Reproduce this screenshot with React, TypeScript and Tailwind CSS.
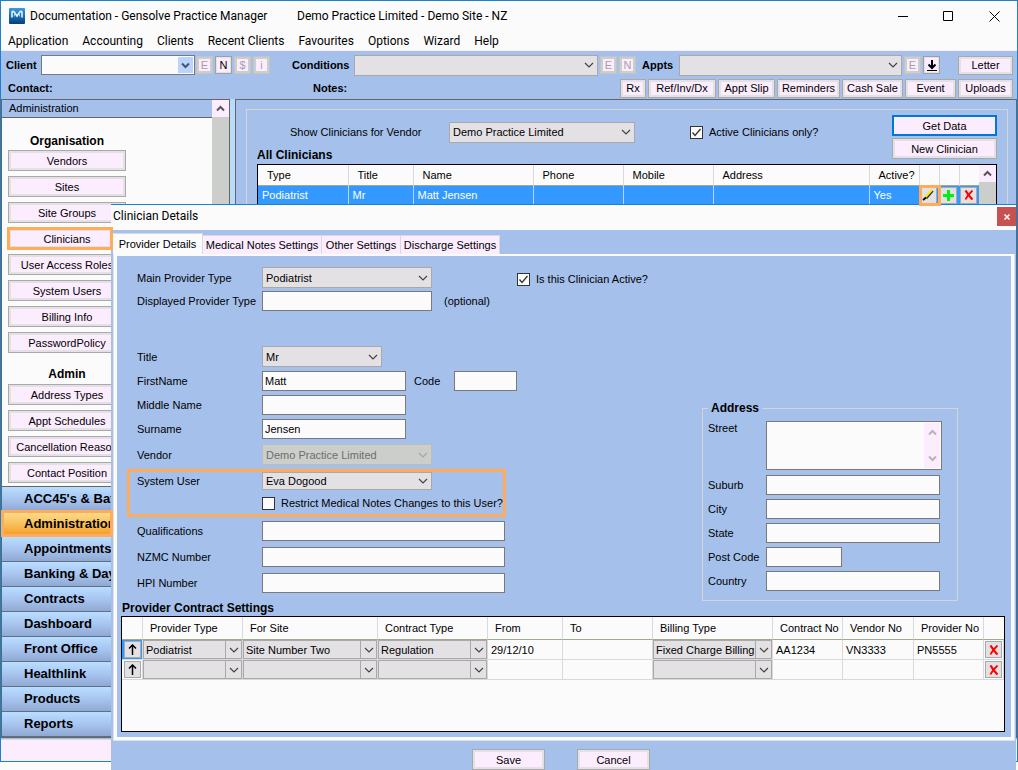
import type { ReactNode } from 'react';
import clsx from 'clsx';

const MENU = ['Application', 'Accounting', 'Clients', 'Recent Clients', 'Favourites', 'Options', 'Wizard', 'Help'];

const ORGANISATION = [
  'Vendors',
  'Sites',
  'Site Groups',
  'Clinicians',
  'User Access Roles',
  'System Users',
  'Billing Info',
  'PasswordPolicy',
];

const ADMIN = ['Address Types', 'Appt Schedules', 'Cancellation Reason', 'Contact Position'];

const SECTIONS = [
  "ACC45's & Batches",
  'Administration',
  'Appointments',
  'Banking & Day',
  'Contracts',
  'Dashboard',
  'Front Office',
  'Healthlink',
  'Products',
  'Reports',
];

/** Quick actions on the second toolbar row */
const ACTIONS = [
  { label: 'Rx', width: 'w-[26px]' },
  { label: 'Ref/Inv/Dx', width: 'w-[68px]' },
  { label: 'Appt Slip', width: 'w-[57px]' },
  { label: 'Reminders', width: 'w-[63px]' },
  { label: 'Cash Sale', width: 'w-[61px]' },
  { label: 'Event', width: 'w-[51px]' },
  { label: 'Uploads', width: 'w-[55px]' },
];

const CONTRACTS = [
  {
    id: 1,
    providerType: 'Podiatrist',
    site: 'Site Number Two',
    contractType: 'Regulation',
    from: '29/12/10',
    billing: 'Fixed Charge Billing',
    contractNo: 'AA1234',
    vendorNo: 'VN3333',
    providerNo: 'PN5555',
  },
  {
    id: 2,
    providerType: '',
    site: '',
    contractType: '',
    from: '',
    billing: '',
    contractNo: '',
    vendorNo: '',
    providerNo: '',
  },
];

/* ---------- icons ---------- */

function Chevron({ className, up = false }: { className?: string; up?: boolean }) {
  return (
    <svg viewBox="0 0 10 6" className={clsx('h-[6px] w-[10px]', className)} fill="none" stroke="currentColor">
      <path d={up ? 'M1 5l4-4 4 4' : 'M1 1l4 4 4-4'} strokeWidth="1.2" />
    </svg>
  );
}

function BoldChevron({ className, up = false }: { className?: string; up?: boolean }) {
  return (
    <svg viewBox="0 0 9 7" className={clsx('h-[7px] w-[9px]', className)} fill="none" stroke="currentColor">
      <path d={up ? 'M1 5.5l3.5-3.5L8 5.5' : 'M1 1.5L4.5 5 8 1.5'} strokeWidth="2" />
    </svg>
  );
}

function AppLogo() {
  return (
    <svg viewBox="0 0 16 16" className="h-4 w-4">
      <defs>
        <linearGradient id="logo-bg" x1="0" y1="0" x2="0" y2="1">
          <stop offset="0" stopColor="#3d9ade" />
          <stop offset="0.5" stopColor="#1870b8" />
          <stop offset="1" stopColor="#0b3c74" />
        </linearGradient>
      </defs>
      <rect width="16" height="16" rx="1" fill="url(#logo-bg)" />
      <path
        d="M3 9.500V4.500C3 3 5 3 5.500 4.500L8 8l2.500-3.500C11 3 13 3 13 4.500v5"
        fill="none"
        stroke="#e8f3fb"
        strokeWidth="1.600"
      />
      <path d="M5.500 8.500V6M10.500 8.500V6" fill="none" stroke="#9cc6e8" strokeWidth="1" />
    </svg>
  );
}

function CrossIcon() {
  return (
    <svg viewBox="0 0 10 10" className="h-[10px] w-[10px]" fill="none" stroke="#f00">
      <path d="M1.500 0.500C3 3 6 7 8.500 9.500" strokeWidth="2.200" />
      <path d="M8.500 0.500C6 3 3 6 1.500 9.500" strokeWidth="1.800" />
    </svg>
  );
}

function PlusIcon() {
  return (
    <svg viewBox="0 0 11 11" className="h-[11px] w-[11px]">
      <path d="M4 0h3v4h4v3H7v4H4V7H0V4h4z" fill="#00f010" />
    </svg>
  );
}

function PencilIcon() {
  return (
    <svg viewBox="0 0 12 12" className="h-3 w-3" fill="none">
      <path d="M11 2L4.500 9.500" stroke="#222" strokeWidth="1.500" />
      <path d="M10 1L3.500 8" stroke="#f5ea00" strokeWidth="2" />
      <path d="M4 8.500L1 11" stroke="#000" strokeWidth="1.800" />
    </svg>
  );
}

function UpArrowIcon() {
  return (
    <svg viewBox="0 0 9 11" className="h-[11px] w-[9px]" fill="none" stroke="#000">
      <path d="M4.500 11V1" strokeWidth="1.500" />
      <path d="M1 4.500l3.500-3.500 3.500 3.500" strokeWidth="1.500" />
    </svg>
  );
}

function DownloadIcon() {
  return (
    <svg viewBox="0 0 10 11" className="h-[11px] w-[10px]" fill="none" stroke="#000">
      <path d="M5 0v8M1.500 4.500L5 8l3.500-3.500" strokeWidth="2" />
      <path d="M0 10.500h10" />
    </svg>
  );
}

/* ---------- controls ---------- */

function Button({ children, className, primary = false }: { children: ReactNode; className?: string; primary?: boolean }) {
  return (
    <button
      type="button"
      className={clsx(
        'flex shrink-0 items-center justify-center whitespace-nowrap bg-[#fcedfe]',
        primary ? 'border-2 border-[#0078d7]' : 'border border-[#a9a9a9] shadow-[inset_0_0_0_2px_#e3e1e4]',
        className,
      )}
    >
      {children}
    </button>
  );
}

/** Square one-letter toolbar button */
function MiniButton({ children, label, disabled = false }: { children: ReactNode; label: string; disabled?: boolean }) {
  return (
    <button
      type="button"
      aria-label={label}
      disabled={disabled}
      className={clsx(
        'flex h-[18px] w-[17px] shrink-0 items-center justify-center border bg-[#fcedfe]',
        disabled
          ? 'border-[#c4c4c4] text-[#a5a0a8] shadow-[inset_0_0_0_2px_#cccecc]'
          : 'border-[#a0a0a0] shadow-[inset_0_0_0_1px_#e3e1e4]',
      )}
    >
      {children}
    </button>
  );
}

interface SelectProps {
  id?: string;
  label?: string;
  value?: string;
  className?: string;
  disabled?: boolean;
  /** Draws a rule between the value and the arrow, as in grid cells */
  split?: boolean;
}

function Select({ id, label, value = '', className, disabled = false, split = false }: SelectProps) {
  return (
    <span className={clsx('relative block', className)}>
      <select
        id={id}
        aria-label={label}
        defaultValue={value}
        disabled={disabled}
        className={clsx(
          'block h-full w-full appearance-none border',
          split ? 'pl-[2px]' : 'pr-4 pl-[3px]',
          disabled ? 'border-[#bcbcbc] bg-[#cccecc] text-[#6d6d6d] opacity-100' : 'border-[#a9a9a9] bg-[#e3e1e4]',
        )}
      >
        <option>{value}</option>
      </select>
      <span
        className={clsx(
          'pointer-events-none absolute inset-y-0 right-0 flex items-center justify-center',
          split ? 'w-[17px] border-l border-[#a9a9a9]' : 'w-[18px]',
          disabled ? 'text-[#a5a5a5]' : 'text-[#444]',
        )}
      >
        <Chevron />
      </span>
    </span>
  );
}

function TextInput({ id, value, className }: { id: string; value?: string; className?: string }) {
  return (
    <input
      id={id}
      type="text"
      defaultValue={value}
      className={clsx('h-5 border border-[#7a7a7a] bg-[#fbfbfb] px-0.5', className)}
    />
  );
}

function CheckBox({ label, checked = false }: { label: string; checked?: boolean }) {
  return (
    <label className="flex items-center gap-[6px] whitespace-nowrap">
      <span className="relative block h-[13px] w-[13px]">
        <input
          type="checkbox"
          defaultChecked={checked}
          className="peer block h-[13px] w-[13px] appearance-none border border-[#333] bg-[#fbfbfb]"
        />
        <svg
          viewBox="0 0 13 13"
          className="pointer-events-none absolute inset-0 hidden h-[13px] w-[13px] peer-checked:block"
          fill="none"
          stroke="#333"
        >
          <path d="M2.500 6.500L5 9.500l5.500-6.500" strokeWidth="1.300" />
        </svg>
      </span>
      {label}
    </label>
  );
}

function Field({ id, label, className, children }: { id: string; label: string; className?: string; children: ReactNode }) {
  return (
    <div className={clsx('flex items-center pl-[10px]', className)}>
      <label htmlFor={id} className="w-[125px] shrink-0 whitespace-nowrap">
        {label}
      </label>
      {children}
    </div>
  );
}

function AddressField({ id, label, width = 'w-[174px]' }: { id: string; label: string; width?: string }) {
  return (
    <div className="mt-1 flex items-center">
      <label htmlFor={id} className="w-[58px] shrink-0">
        {label}
      </label>
      <TextInput id={id} className={width} />
    </div>
  );
}

/** Orange marker around a sidebar entry */
function Highlight({ className }: { className: string }) {
  return <span className={clsx('pointer-events-none absolute z-10 border-3 border-[#ffab5c]', className)} />;
}

/* ---------- main window ---------- */

function TitleBar() {
  return (
    <header className="bg-[#fbfbfb] font-['Roboto',sans-serif] text-[12px]">
      <div className="flex h-[30px] items-center pl-2">
        <AppLogo />
        <h1 className="ml-[5px] w-[267px] whitespace-nowrap">Documentation - Gensolve Practice Manager</h1>
        <span className="whitespace-nowrap">Demo Practice Limited - Demo Site - NZ</span>
        <div className="ml-auto flex">
          <button type="button" aria-label="Minimise" className="flex h-[30px] w-[45px] items-center justify-center">
            <svg viewBox="0 0 11 11" className="h-[11px] w-[11px]" stroke="#000">
              <path d="M0 5.500h10" />
            </svg>
          </button>
          <button type="button" aria-label="Maximise" className="flex h-[30px] w-[45px] items-center justify-center">
            <svg viewBox="0 0 11 11" className="h-[11px] w-[11px]" stroke="#000" fill="none">
              <path d="M0.500 0.500h9v9h-9z" />
            </svg>
          </button>
          <button type="button" aria-label="Close" className="flex h-[30px] w-[46px] items-center justify-center">
            <svg viewBox="0 0 11 11" className="h-[11px] w-[11px]" stroke="#000">
              <path d="M0.500 0.500l10 10M10.500 0.500l-10 10" />
            </svg>
          </button>
        </div>
      </div>
      <nav className="flex h-5 items-center gap-[14px] border-b border-[#fcedfe] pl-[7px]">
        {MENU.map((item) => (
          <button key={item} type="button" className="whitespace-nowrap">
            {item}
          </button>
        ))}
      </nav>
    </header>
  );
}

function Toolbar() {
  return (
    <div className="h-12 pt-1 pl-[5px] pr-1">
      <div className="flex h-5 items-center">
        <label htmlFor="client" className="w-[35px] font-bold">
          Client
        </label>
        <span className="relative mr-px block h-5 w-[154px]">
          <select id="client" className="block h-5 w-full appearance-none border border-[#7a7a7a] bg-[#fbfbfb]" />
          <span className="pointer-events-none absolute inset-y-[2px] right-[2px] flex w-[15px] items-center justify-center bg-[#bcd4fb] text-[#44566f]">
            <BoldChevron />
          </span>
        </span>
        <div className="flex gap-[2px]">
          <MiniButton label="Edit client" disabled>E</MiniButton>
          <MiniButton label="New client">N</MiniButton>
          <MiniButton label="Client account" disabled>$</MiniButton>
          <MiniButton label="Client info" disabled>i</MiniButton>
        </div>
        <label htmlFor="conditions" className="ml-[22px] w-[62px] font-bold">
          Conditions
        </label>
        <Select id="conditions" className="h-[21px] flex-1" />
        <div className="ml-[2px] flex gap-[2px]">
          <MiniButton label="Edit condition" disabled>E</MiniButton>
          <MiniButton label="New condition" disabled>N</MiniButton>
        </div>
        <label htmlFor="appts" className="ml-[6px] w-[37px] font-bold">
          Appts
        </label>
        <Select id="appts" className="h-[21px] w-[223px]" />
        <div className="ml-[2px] flex gap-[2px]">
          <MiniButton label="Edit appointment" disabled>E</MiniButton>
          <MiniButton label="Download">
            <DownloadIcon />
          </MiniButton>
        </div>
        <Button className="ml-[18px] h-[19px] w-[55px]">Letter</Button>
      </div>
      <div className="mt-[3px] flex h-5 items-center">
        <span className="w-[307px] pl-[2px] font-bold">Contact:</span>
        <span className="font-bold">Notes:</span>
        <div className="ml-auto flex gap-[2px]">
          {ACTIONS.map(({ label, width }) => (
            <Button key={label} className={clsx('h-[19px]', width)}>
              {label}
            </Button>
          ))}
        </div>
      </div>
    </div>
  );
}

function Sidebar() {
  return (
    <aside className="flex w-[229px] shrink-0 flex-col border border-[#666] bg-[#fbfbfb]">
      <div className="flex h-[386px]">
        <div className="flex-1">
          <h2 className="h-[18px] border-b border-[#666] bg-[#a5c0eb] pl-[7px] leading-[17px]">Administration</h2>
          <div className="w-[124px] pl-[6px]">
            <h3 className="mt-[14px] h-[18px] text-center text-[12px] leading-[18px] font-bold">Organisation</h3>
            <div className="flex flex-col gap-[5px]">
              {ORGANISATION.map((item) => (
                <div key={item} className="relative">
                  <Button className="h-[21px] w-[118px]">{item}</Button>
                  {item === 'Clinicians' && <Highlight className="-top-px -left-px h-[23px] w-[106px]" />}
                </div>
              ))}
            </div>
            <h3 className="mt-3 h-[19px] text-center text-[12px] leading-[19px] font-bold">Admin</h3>
            <div className="flex flex-col gap-[5px]">
              {ADMIN.map((item) => (
                <Button key={item} className="h-[21px] w-[118px]">
                  {item}
                </Button>
              ))}
            </div>
          </div>
        </div>
        <div className="w-[17px] bg-[#cccecc]">
          <div className="flex h-[17px] items-center justify-center bg-[#fcedfe] text-[#555]">
            <BoldChevron up />
          </div>
        </div>
      </div>
      <nav className="border-t border-[#666]">
        {SECTIONS.map((item) => (
          <div key={item} className="relative">
            <button
              type="button"
              className={clsx(
                'block h-[25px] w-full border-b border-[#5f6f86] bg-linear-to-b pl-[22px] text-left text-[13px] font-bold whitespace-nowrap',
                item === 'Administration'
                  ? 'from-[#fbdc8c] via-[#f8c05a] to-[#f39a1e]'
                  : 'from-[#b9deff] via-[#a8c5f0] to-[#8fa9d2]',
              )}
            >
              {item}
            </button>
            {item === 'Administration' && <Highlight className="-top-0.5 -left-px h-[27px] w-[112px]" />}
          </div>
        ))}
      </nav>
    </aside>
  );
}

function CliniciansPane() {
  const head = 'border-r border-[#d9d9d9] pl-[9px] text-left font-normal last:border-r-0';
  const cell = 'border-r border-[#b8d8f8] pl-1 last:border-r-0';
  const tool = 'flex h-[17px] w-[17px] items-center justify-center border border-[#a9a9a9] bg-[#e3e1e4]';

  return (
    <main className="min-w-0 flex-1 border-t border-r border-l border-[#666] pt-[9px] pr-2 pl-[10px]">
      <section className="h-full border border-[#d5d5d5] pr-[10px] pl-[10px]">
        <div className="flex pt-[5px]">
          <div className="flex h-[34px] flex-1 items-center pl-[33px]">
            <label htmlFor="vendor-filter" className="w-[159px] whitespace-nowrap">
              Show Clinicians for Vendor
            </label>
            <Select id="vendor-filter" value="Demo Practice Limited" className="h-[21px] w-[186px]" />
            <div className="ml-[55px]">
              <CheckBox label="Active Clinicians only?" checked />
            </div>
          </div>
          <div className="flex flex-col gap-[2px]">
            <Button primary className="h-[21px] w-[105px]">
              Get Data
            </Button>
            <Button className="h-[21px] w-[105px]">New Clinician</Button>
          </div>
        </div>
        <h2 className="-mt-3 text-[12px] leading-[17px] font-bold">All Clinicians</h2>
        <div className="flex border border-black bg-[#fbfbfb]">
          <table className="w-full table-fixed border-collapse">
            <colgroup>
              <col className="w-[90px]" />
              <col className="w-[65px]" />
              <col className="w-[120px]" />
              <col className="w-[90px]" />
              <col className="w-[90px]" />
              <col />
              <col className="w-[50px]" />
              <col className="w-5" />
              <col className="w-5" />
              <col className="w-5" />
            </colgroup>
            <thead>
              <tr className="h-5 border-b border-[#a0a890]">
                <th className={head}>Type</th>
                <th className={head}>Title</th>
                <th className={head}>Name</th>
                <th className={head}>Phone</th>
                <th className={head}>Mobile</th>
                <th className={head}>Address</th>
                <th className={head}>Active?</th>
                <th className={head} />
                <th className={head} />
                <th className={head} />
              </tr>
            </thead>
            <tbody>
              <tr className="h-5 bg-[#3399ff] text-white">
                <td className={cell}>Podiatrist</td>
                <td className={cell}>Mr</td>
                <td className={cell}>Matt Jensen</td>
                <td className={cell} />
                <td className={cell} />
                <td className={cell} />
                <td className={cell}>Yes</td>
                <td>
                  <div className="relative">
                    <button type="button" aria-label="Edit clinician" className={tool}>
                      <PencilIcon />
                    </button>
                    <Highlight className="-top-0.5 -left-px h-[21px] w-[22px]" />
                  </div>
                </td>
                <td className="pl-px">
                  <button type="button" aria-label="Add clinician" className={tool}>
                    <PlusIcon />
                  </button>
                </td>
                <td className="pl-px">
                  <button type="button" aria-label="Delete clinician" className={tool}>
                    <CrossIcon />
                  </button>
                </td>
              </tr>
            </tbody>
          </table>
          <div className="w-[17px] shrink-0 bg-[#cccecc]">
            <div className="flex h-[17px] items-center justify-center bg-[#fcedfe] text-[#555]">
              <BoldChevron up />
            </div>
          </div>
        </div>
      </section>
    </main>
  );
}

/* ---------- clinician dialog ---------- */

function ContractTable() {
  const head = 'border-r border-[#d9d9d9] pl-[7px] text-left font-normal whitespace-nowrap last:border-r-0';
  const cell = 'border-r border-b border-[#d9d9d9] p-0';
  const box = 'flex items-center justify-center border border-[#a9a9a9] bg-[#e3e1e4]';

  return (
    <div className="h-[116px] border border-black bg-[#fbfbfb]">
      <table className="w-full table-fixed border-separate border-spacing-0">
        <colgroup>
          <col className="w-[21px]" />
          <col className="w-[100px]" />
          <col className="w-[135px]" />
          <col className="w-[110px]" />
          <col className="w-[75px]" />
          <col />
          <col className="w-[120px]" />
          <col className="w-[70px]" />
          <col className="w-[71px]" />
          <col className="w-[70px]" />
          <col className="w-5" />
        </colgroup>
        <thead>
          <tr className="h-[23px] [&>th]:border-b [&>th]:border-b-[#a0a890]">
            <th className={head} />
            <th className={head}>Provider Type</th>
            <th className={head}>For Site</th>
            <th className={head}>Contract Type</th>
            <th className={head}>From</th>
            <th className={head}>To</th>
            <th className={head}>Billing Type</th>
            <th className={head}>Contract No</th>
            <th className={head}>Vendor No</th>
            <th className={head}>Provider No</th>
            <th className={head} />
          </tr>
        </thead>
        <tbody>
          {CONTRACTS.map((row, index) => (
            <tr key={row.id} className="h-5">
              <td className={clsx(cell, index === 0 && 'bg-[#3399ff]')}>
                <button type="button" aria-label="Move up" className={clsx(box, 'mx-auto h-[17px] w-[17px]')}>
                  <UpArrowIcon />
                </button>
              </td>
              <td className={cell}>
                <Select label="Provider type" value={row.providerType} className="h-[19px]" split />
              </td>
              <td className={cell}>
                <Select label="Site" value={row.site} className="h-[19px]" split />
              </td>
              <td className={cell}>
                <Select label="Contract type" value={row.contractType} className="h-[19px]" split />
              </td>
              <td className={clsx(cell, 'pl-[3px]')}>{row.from}</td>
              <td className={cell} />
              <td className={cell}>
                <Select label="Billing type" value={row.billing} className="h-[19px]" split />
              </td>
              <td className={clsx(cell, 'pl-[3px]')}>{row.contractNo}</td>
              <td className={clsx(cell, 'pl-[3px]')}>{row.vendorNo}</td>
              <td className={clsx(cell, 'pl-[3px]')}>{row.providerNo}</td>
              <td className={cell}>
                <button type="button" aria-label="Delete contract" className={clsx(box, 'mx-auto h-[17px] w-[17px]')}>
                  <CrossIcon />
                </button>
              </td>
            </tr>
          ))}
        </tbody>
      </table>
    </div>
  );
}

function ClinicianForm() {
  return (
    <form className="flex pt-[11px]">
      <div className="w-[400px] shrink-0 pl-[10px]">
        <Field id="main-type" label="Main Provider Type">
          <Select id="main-type" value="Podiatrist" className="h-[21px] w-[170px]" />
        </Field>
        <Field id="display-type" label="Displayed Provider Type" className="mt-[3px]">
          <TextInput id="display-type" className="w-[170px]" />
          <span className="ml-3">(optional)</span>
        </Field>
        <Field id="title" label="Title" className="mt-[35px]">
          <Select id="title" value="Mr" className="h-[21px] w-[120px]" />
        </Field>
        <Field id="first-name" label="FirstName" className="mt-1">
          <TextInput id="first-name" value="Matt" className="w-36" />
          <label htmlFor="code" className="ml-2 w-10">
            Code
          </label>
          <TextInput id="code" className="w-[63px]" />
        </Field>
        <Field id="middle-name" label="Middle Name" className="mt-1">
          <TextInput id="middle-name" className="w-36" />
        </Field>
        <Field id="surname" label="Surname" className="mt-1">
          <TextInput id="surname" value="Jensen" className="w-36" />
        </Field>
        <Field id="vendor" label="Vendor" className="mt-[5px]">
          <Select id="vendor" value="Demo Practice Limited" className="h-[21px] w-[170px]" disabled />
        </Field>
        <div className="mt-1 h-12 w-[379px] border-3 border-[#ffab5c] [&>div]:pl-[7px]">
          <Field id="system-user" label="System User">
            <Select id="system-user" value="Eva Dogood" className="h-[18px] w-[170px]" />
          </Field>
          <div className="mt-[6px] flex">
            <span className="w-[125px]" />
            <CheckBox label="Restrict Medical Notes Changes to this User?" />
          </div>
        </div>
        <Field id="qualifications" label="Qualifications" className="mt-1">
          <TextInput id="qualifications" className="w-[243px]" />
        </Field>
        <Field id="nzmc" label="NZMC Number" className="mt-[6px]">
          <TextInput id="nzmc" className="w-[243px]" />
        </Field>
        <Field id="hpi" label="HPI Number" className="mt-[6px]">
          <TextInput id="hpi" className="w-[243px]" />
        </Field>
      </div>
      <div className="flex flex-1 flex-col pt-[5px] pr-[53px]">
        <CheckBox label="Is this Clinician Active?" checked />
        <fieldset className="mt-[114px] w-64 self-end border border-[#d5d5d5] px-[5px] pb-[9px]">
          <legend className="px-[3px] text-[12px] leading-4 font-bold">Address</legend>
          <div className="flex pt-[5px] pb-px">
            <label htmlFor="street" className="w-[58px] shrink-0">
              Street
            </label>
            <div className="flex h-[49px] w-44 border border-[#7a7a7a] bg-[#fbfbfb] p-px">
              <textarea id="street" className="h-full min-w-0 flex-1 resize-none" />
              <div className="flex w-4 flex-col items-center justify-between bg-[#fcedfe] py-[6px] text-[#b5b5b5]">
                <BoldChevron up />
                <BoldChevron />
              </div>
            </div>
          </div>
          <AddressField id="suburb" label="Suburb" />
          <AddressField id="city" label="City" />
          <AddressField id="state" label="State" />
          <AddressField id="post-code" label="Post Code" width="w-[76px]" />
          <AddressField id="country" label="Country" />
        </fieldset>
      </div>
    </form>
  );
}

function ClinicianDialog() {
  const tab = 'h-[19px] border border-b-0 border-l-0 border-[#d9d9d9] bg-[#fcedfe] whitespace-nowrap';

  return (
    <div
      role="dialog"
      aria-labelledby="dialog-title"
      className="absolute top-[204px] right-[2px] left-[111px] border-t border-[#1a80d0] bg-[#a5c0eb]"
    >
      <div className="flex h-[25px] items-start justify-between bg-[#fbfbfb]">
        <h2 id="dialog-title" className="pl-[2px] font-['Roboto',sans-serif] text-[12px] leading-[23px]">
          Clinician Details
        </h2>
        <button
          type="button"
          aria-label="Close dialog"
          className="mt-[2px] flex h-[19px] w-[19px] items-center justify-center bg-[#c75050]"
        >
          <svg viewBox="0 0 6 6" className="h-[6px] w-[6px]" stroke="#fff" strokeWidth="1.500">
            <path d="M0.500 0.500l5 5M5.500 0.500l-5 5" />
          </svg>
        </button>
      </div>

      <div className="pt-[3px] pr-px pl-[2px]">
        <div role="tablist" className="flex items-end">
          <button
            type="button"
            role="tab"
            aria-selected="true"
            className="h-[21px] w-[90px] border-t border-r border-[#d9d9d9] bg-[#fbfbfb] whitespace-nowrap"
          >
            Provider Details
          </button>
          <button type="button" role="tab" className={clsx(tab, 'w-[119px]')}>
            Medical Notes Settings
          </button>
          <button type="button" role="tab" className={clsx(tab, 'w-[79px]')}>
            Other Settings
          </button>
          <button type="button" role="tab" className={clsx(tab, 'w-[99px]')}>
            Discharge Settings
          </button>
        </div>
        <div className="border border-t-0 border-[#e3e1e4]">
          <div role="tabpanel" className="border-3 border-t-2 border-[#fbfbfb] pb-[5px]">
            <ClinicianForm />
            <section className="pr-[6px] pl-1">
              <h3 className="pl-px text-[12px] leading-[15px] font-bold">Provider Contract Settings</h3>
              <ContractTable />
            </section>
          </div>
        </div>
      </div>

      <div className="flex justify-center gap-8 pt-2 pr-[5px]">
        <Button className="h-[21px] w-[73px]">Save</Button>
        <Button className="h-[21px] w-[73px]">Cancel</Button>
      </div>
    </div>
  );
}

export default function App() {
  return (
    <div className="relative min-h-screen overflow-hidden bg-[#fbfbfb] font-['Liberation_Sans',Arial,sans-serif] text-[11px] leading-[14px] text-black">
      <div className="border border-[#1a80d0] bg-[#a5c0eb]">
        <TitleBar />
        <Toolbar />
        <div className="flex">
          <Sidebar />
          <div className="w-[5px] shrink-0 bg-[#b9dcfb]" />
          <CliniciansPane />
        </div>
        <footer className="mt-px h-[22px] border-t border-[#d9d9d9] bg-[#fcedfe]" />
      </div>
      <ClinicianDialog />
    </div>
  );
}
